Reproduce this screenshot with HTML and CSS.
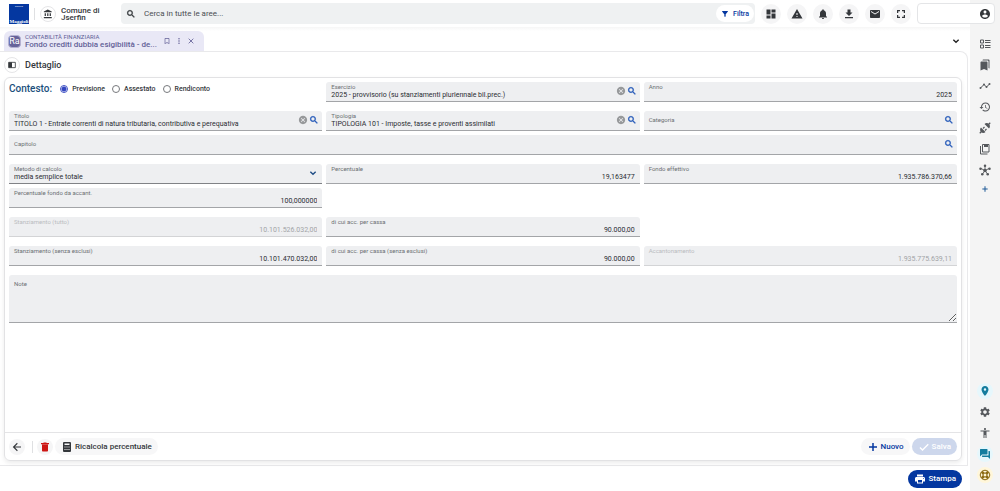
FILE: index.html
```html
<!DOCTYPE html>
<html lang="it">
<head>
<meta charset="utf-8">
<title>Fondo crediti dubbia esigibilità</title>
<meta name="viewport" content="width=device-width, initial-scale=1">
<link rel="stylesheet" href="styles.css">
</head>
<body>
<svg class="sprite" aria-hidden="true">
  <symbol id="search" viewBox="0 0 24 24"><path d="M15.5 14h-.79l-.28-.27A6.471 6.471 0 0 0 16 9.5 6.5 6.5 0 1 0 9.5 16c1.61 0 3.09-.59 4.23-1.57l.27.28v.79l5 4.99L20.49 19l-4.99-5zm-6 0C7.01 14 5 11.99 5 9.5S7.01 5 9.5 5 14 7.01 14 9.5 11.99 14 9.5 14z" stroke="currentColor"/></symbol>
  <symbol id="cancel" viewBox="0 0 24 24"><path d="M12 2C6.47 2 2 6.47 2 12s4.47 10 10 10 10-4.47 10-10S17.53 2 12 2zm5 13.59L15.59 17 12 13.41 8.41 17 7 15.59 10.59 12 7 8.41 8.41 7 12 10.59 15.59 7 17 8.41 13.41 12 17 15.59z"/></symbol>
  <symbol id="expand" viewBox="0 0 24 24"><path d="M4 8l8 8 8-8" fill="none" stroke="currentColor" stroke-width="4"/></symbol>
  <symbol id="add" viewBox="0 0 24 24"><path d="M20 13.500h-6.500V20h-3v-6.500H4v-3h6.500V4h3v6.500H20z"/></symbol>
</svg>
<div class="app">
  <header class="topbar">
    <div class="brand">
      <a class="logo" href="#" aria-label="Maggioli"><span class="logo-top">GRUPPO</span><span class="logo-name">Maggioli</span></a>
      <span class="divider"></span>
      <button class="round outlined" aria-label="Ente"><svg class="icon" viewBox="0 0 24 24"><path d="M4 10v7h3v-7H4zm6 0v7h3v-7h-3zM2 22h19v-3H2v3zm14-12v7h3v-7h-3zm-4.500-9L2 6v2h19V6l-9.500-5z"/></svg></button>
      <div class="org">Comune di Jserfin</div>
    </div>
    <div class="searchbox">
      <svg class="icon small"><use href="#search"/></svg>
      <input type="text" aria-label="Cerca" placeholder="Cerca in tutte le aree...">
      <button class="filter"><svg class="icon tiny" viewBox="0 0 24 24"><path d="M3.250 4.610C5.270 7.200 10 13 10 13v6c0 .55.45 1 1 1h2c.55 0 1-.45 1-1v-6s4.720-5.800 6.740-8.390A1 1 0 0 0 19.950 3H4.040a1 1 0 0 0-.79 1.610z"/></svg>Filtra</button>
    </div>
    <nav class="actions" aria-label="Azioni">
      <button class="round" aria-label="Dashboard"><svg class="icon" viewBox="0 0 24 24"><path d="M3 13h8V3H3v10zm0 8h8v-6H3v6zm10 0h8V11h-8v10zm0-18v6h8V3h-8z"/></svg></button>
      <button class="round" aria-label="Avvisi"><svg class="icon" viewBox="0 0 24 24"><path d="M1 21h22L12 2 1 21zm12-3h-2v-2h2v2zm0-4h-2v-4h2v4z"/></svg></button>
      <button class="round" aria-label="Notifiche"><svg class="icon" viewBox="0 0 24 24"><path d="M12 22c1.100 0 2-.9 2-2h-4c0 1.100.89 2 2 2zm6-6v-5c0-3.070-1.640-5.640-4.500-6.320V4c0-.83-.67-1.500-1.500-1.500s-1.500.67-1.500 1.500v.68C7.630 5.360 6 7.920 6 11v5l-2 2v1h16v-1l-2-2z"/></svg></button>
      <button class="round" aria-label="Scarica"><svg class="icon" viewBox="0 0 24 24"><path d="M19 9h-4V3H9v6H5l7 7 7-7zM4 18v2.500h16V18H4z"/></svg></button>
      <button class="round" aria-label="Posta"><svg class="icon" viewBox="0 0 24 24"><path d="M20 4H4c-1.100 0-1.990.9-1.990 2L2 18c0 1.100.9 2 2 2h16c1.100 0 2-.9 2-2V6c0-1.100-.9-2-2-2zm0 4l-8 5-8-5V6l8 5 8-5v2z"/></svg></button>
      <button class="round" aria-label="Schermo intero"><svg class="icon" viewBox="0 0 24 24"><path d="M6.500 14H4v6h6v-2.500H6.500V14zM4 10h2.500V6.500H10V4H4v6zm13.500 7.500H14V20h6v-6h-2.500v3.500zM14 4v2.500h3.500V10H20V4h-6z"/></svg></button>
    </nav>
    <button class="profile" aria-label="Profilo"><svg class="icon" viewBox="0 0 24 24"><path d="M12 2C6.480 2 2 6.480 2 12s4.480 10 10 10 10-4.480 10-10S17.520 2 12 2zm0 3c1.660 0 3 1.340 3 3s-1.340 3-3 3-3-1.340-3-3 1.340-3 3-3zm0 14.200c-2.500 0-4.710-1.280-6-3.220.03-1.990 4-3.080 6-3.080 1.990 0 5.970 1.090 6 3.080-1.290 1.940-3.500 3.220-6 3.220z"/></svg></button>
  </header>

  <div class="workspace">
    <div class="tabbar">
      <div class="tab">
        <span class="tab-badge">Ra</span>
        <div class="tab-text"><span class="tab-area">CONTABILITÀ FINANZIARIA</span><span class="tab-title">Fondo crediti dubbia esigibilità - de...</span></div>
        <button class="tab-action" aria-label="Segnalibro"><svg class="icon tiny" viewBox="0 0 24 24"><path d="M17 3H7c-1.100 0-2 .9-2 2v16l7-3 7 3V5c0-1.100-.9-2-2-2zm0 15l-5-2.200L7 18V5h10v13z"/></svg></button>
        <button class="tab-action" aria-label="Altro"><svg class="icon tiny" viewBox="0 0 24 24"><circle cx="12" cy="5" r="2.200"/><circle cx="12" cy="12" r="2.200"/><circle cx="12" cy="19" r="2.200"/></svg></button>
        <button class="tab-action" aria-label="Chiudi"><svg class="icon tiny" viewBox="0 0 24 24"><path d="M5 5l14 14M19 5L5 19" stroke="currentColor" stroke-width="2.500"/></svg></button>
      </div>
      <button class="tab-action collapse" aria-label="Elenco schede"><svg class="icon tiny"><use href="#expand"/></svg></button>
    </div>

    <main class="panel">
      <div class="panel-head">
        <button class="round outlined" aria-label="Pannello laterale"><svg class="icon tiny" viewBox="0 0 24 24"><path d="M2 4h20v16H2z" fill="none" stroke="currentColor" stroke-width="2.500"/><path d="M2 4h10v16H2z"/></svg></button>
        <h1>Dettaglio</h1>
      </div>
      <form class="card">
        <div class="form-body">
          <div class="row">
            <div class="context" role="radiogroup" aria-labelledby="ctx">
              <span class="context-title" id="ctx">Contesto:</span>
              <label><input type="radio" name="contesto" checked>Previsione</label>
              <label><input type="radio" name="contesto">Assestato</label>
              <label><input type="radio" name="contesto">Rendiconto</label>
            </div>
            <div class="field"><div class="text"><label for="esercizio">Esercizio</label><input id="esercizio" value="2025 - provvisorio (su stanziamenti pluriennale bil.prec.)"></div><button type="button" class="clear" aria-label="Cancella"><svg class="icon small"><use href="#cancel"/></svg></button><button type="button" class="lookup" aria-label="Cerca"><svg class="icon small"><use href="#search"/></svg></button></div>
            <div class="field number"><div class="text"><label for="anno">Anno</label><input id="anno" value="2025"></div></div>
          </div>
          <div class="row tight">
            <div class="field"><div class="text"><label for="titolo">Titolo</label><input id="titolo" value="TITOLO 1 - Entrate correnti di natura tributaria, contributiva e perequativa"></div><button type="button" class="clear" aria-label="Cancella"><svg class="icon small"><use href="#cancel"/></svg></button><button type="button" class="lookup" aria-label="Cerca"><svg class="icon small"><use href="#search"/></svg></button></div>
            <div class="field"><div class="text"><label for="tipologia">Tipologia</label><input id="tipologia" value="TIPOLOGIA 101 - Imposte, tasse e proventi assimilati"></div><button type="button" class="clear" aria-label="Cancella"><svg class="icon small"><use href="#cancel"/></svg></button><button type="button" class="lookup" aria-label="Cerca"><svg class="icon small"><use href="#search"/></svg></button></div>
            <div class="field empty"><label for="categoria">Categoria</label><input id="categoria"><button type="button" class="lookup" aria-label="Cerca"><svg class="icon small"><use href="#search"/></svg></button></div>
          </div>
          <div class="row">
            <div class="field empty wide"><label for="capitolo">Capitolo</label><input id="capitolo"><button type="button" class="lookup" aria-label="Cerca"><svg class="icon small"><use href="#search"/></svg></button></div>
          </div>
          <div class="row tight">
            <div class="field focus"><div class="text"><label for="metodo">Metodo di calcolo</label><select id="metodo"><option>media semplice totale</option></select></div><svg class="icon tiny chevron"><use href="#expand"/></svg></div>
            <div class="field number"><div class="text"><label for="perc">Percentuale</label><input id="perc" value="19,163477"></div></div>
            <div class="field number"><div class="text"><label for="fondo">Fondo effettivo</label><input id="fondo" value="1.935.786.370,66"></div></div>
          </div>
          <div class="row">
            <div class="field number"><div class="text"><label for="accant">Percentuale fondo da accant.</label><input id="accant" value="100,000000"></div></div>
          </div>
          <div class="row">
            <div class="field number disabled"><div class="text"><label for="stanz">Stanziamento (tutto)</label><input id="stanz" value="10.101.526.032,00" disabled></div></div>
            <div class="field number"><div class="text"><label for="cassa">di cui acc. per cassa</label><input id="cassa" value="90.000,00"></div></div>
          </div>
          <div class="row">
            <div class="field number"><div class="text"><label for="stanz2">Stanziamento (senza esclusi)</label><input id="stanz2" value="10.101.470.032,00"></div></div>
            <div class="field number"><div class="text"><label for="cassa2">di cui acc. per cassa (senza esclusi)</label><input id="cassa2" value="90.000,00"></div></div>
            <div class="field number disabled"><div class="text"><label for="accantonamento">Accantonamento</label><input id="accantonamento" value="1.935.775.639,11" disabled></div></div>
          </div>
          <div class="note"><label for="note">Note</label><textarea id="note"></textarea></div>
        </div>
        <div class="card-foot">
          <button type="button" class="round" aria-label="Indietro"><svg class="icon" viewBox="0 0 24 24"><path d="M20 10.800H8l5.400-5.400L12 3.500 3.500 12l8.500 8.500 1.500-1.900L8 13.200h12z"/></svg></button>
          <span class="divider"></span>
          <button type="button" class="round danger" aria-label="Elimina"><svg class="icon" viewBox="0 0 24 24"><path d="M6 19c0 1.100.9 2 2 2h8c1.100 0 2-.9 2-2V7H6v12zM20 4h-4.500l-1-1h-5l-1 1H4v2.300h16V4z"/></svg></button>
          <button type="button" class="pill recalc"><svg class="icon" viewBox="0 0 24 24"><path fill-rule="evenodd" d="M6 2h12a2 2 0 0 1 2 2v16a2 2 0 0 1-2 2H6a2 2 0 0 1-2-2V4a2 2 0 0 1 2-2zm1 3v3h10V5zm0 6v2h2v-2zm4 0v2h2v-2zm4 0v2h2v-2zm-8 5v2h2v-2zm4 0v2h2v-2zm4 0v2h2v-2z"/></svg>Ricalcola percentuale</button>
          <span class="spacer"></span>
          <button type="button" class="pill new"><svg class="icon"><use href="#add"/></svg>Nuovo</button>
          <button type="button" class="pill save" disabled><svg class="icon" viewBox="0 0 24 24"><path d="M9 16.200L4.800 12l-1.900 1.900L9 20 21.500 7.500l-1.900-1.900z"/></svg>Salva</button>
        </div>
      </form>
    </main>

    <footer class="bottombar"><button class="pill print"><svg class="icon" viewBox="0 0 24 24"><path d="M19 8H5c-1.660 0-3 1.340-3 3v6h4v4h12v-4h4v-6c0-1.660-1.340-3-3-3zm-3 11H8v-5h8v5zm3-7c-.55 0-1-.45-1-1s.45-1 1-1 1 .45 1 1-.45 1-1 1zm-1-9H6v4h12V3z"/></svg>Stampa</button></footer>
  </div>

  <aside class="rail">
    <button aria-label="Elenco"><svg class="icon" viewBox="0 0 24 24"><path d="M3 4h6v6H3zM3 14h6v6H3z" fill="none" stroke="currentColor" stroke-width="2"/><path d="M12 4h11v2H12zm0 4h11v2H12zm0 6h11v2H12zm0 4h11v2H12z"/></svg></button>
    <button aria-label="Segnalibri"><svg class="icon" viewBox="0 0 24 24"><path d="M19 18l2 1V3c0-1.100-.9-2-2-2H8.990C7.890 1 7 1.900 7 3h10c1.100 0 2 .9 2 2v13zM15 5H5c-1.100 0-2 .9-2 2v16l7-3 7 3V7c0-1.100-.9-2-2-2z"/></svg></button>
    <button aria-label="Andamento"><svg class="icon" viewBox="0 0 24 24"><path d="M3 16l7-7 5 5 6-6" fill="none" stroke="currentColor" stroke-width="2"/><circle cx="3" cy="16" r="2"/><circle cx="10" cy="9" r="2"/><circle cx="15" cy="14" r="2"/><circle cx="21" cy="8" r="2"/></svg></button>
    <button aria-label="Cronologia"><svg class="icon" viewBox="0 0 24 24"><path d="M13 3c-4.970 0-9 4.030-9 9H1l3.890 3.890.07.14L9 12H6c0-3.870 3.130-7 7-7s7 3.130 7 7-3.130 7-7 7c-1.930 0-3.680-.79-4.940-2.060l-1.420 1.420C8.270 19.990 10.510 21 13 21c4.970 0 9-4.030 9-9s-4.030-9-9-9zm-1 5v5l4.280 2.540.72-1.210-3.500-2.080V8H12z"/></svg></button>
    <button aria-label="Connessioni"><svg class="icon" viewBox="0 0 24 24"><path d="M1.500 22.500l4-4M18.500 5.500l4-4M8 13l3-3M12 17l3-3" stroke="currentColor" stroke-width="2.400"/><path d="M4 11l9 9c-2.500 2.500-6.500 2.500-9 0s-2.500-6.500 0-9zM11 4l9 9c2.500-2.500 2.500-6.500 0-9s-6.500-2.500-9 0z"/></svg></button>
    <button aria-label="Copia"><svg class="icon" viewBox="0 0 24 24"><path d="M3 6v16h14M7 3h13v15H7z" fill="none" stroke="currentColor" stroke-width="2"/><path d="M10 2h8v6h-8z"/></svg></button>
    <button aria-label="Rete"><svg class="icon" viewBox="0 0 24 24"><path d="M12 13V4M12 13L4 9M12 13l8-4M12 13l-5 7M12 13l5 7" stroke="currentColor" stroke-width="1.800"/><circle cx="12" cy="13" r="3.500"/><circle cx="12" cy="3.500" r="2.500"/><circle cx="3" cy="9.500" r="2.500"/><circle cx="21" cy="9.500" r="2.500"/><circle cx="6.500" cy="20.500" r="2.500"/><circle cx="17.500" cy="20.500" r="2.500"/></svg></button>
    <button class="blue" aria-label="Aggiungi"><svg class="icon tiny"><use href="#add"/></svg></button>
    <span class="spacer"></span>
    <button class="teal" aria-label="Posizione"><svg class="icon" viewBox="0 0 24 24"><path d="M12 2C8.130 2 5 5.130 5 9c0 5.250 7 13 7 13s7-7.750 7-13c0-3.870-3.130-7-7-7zm0 9.500a2.500 2.500 0 0 1 0-5 2.500 2.500 0 0 1 0 5z"/></svg></button>
    <button aria-label="Impostazioni"><svg class="icon" viewBox="0 0 24 24"><path d="M19.140 12.940c.04-.3.06-.61.06-.94 0-.32-.02-.64-.07-.94l2.030-1.580c.18-.14.23-.41.12-.61l-1.920-3.320c-.12-.22-.37-.29-.59-.22l-2.390.96c-.5-.38-1.030-.7-1.620-.94l-.36-2.540c-.04-.24-.24-.41-.48-.41h-3.840c-.24 0-.43.17-.47.41l-.36 2.540c-.59.24-1.130.57-1.620.94l-2.390-.96c-.22-.08-.47 0-.59.22L2.740 8.870c-.12.21-.08.47.12.61l2.030 1.580c-.05.3-.09.63-.09.94s.02.64.07.94l-2.030 1.580c-.18.14-.23.41-.12.61l1.920 3.320c.12.22.37.29.59.22l2.390-.96c.5.38 1.030.7 1.620.94l.36 2.540c.05.24.24.41.48.41h3.840c.24 0 .44-.17.47-.41l.36-2.540c.59-.24 1.130-.56 1.620-.94l2.390.96c.22.08.47 0 .59-.22l1.920-3.320c.12-.22.07-.47-.12-.61l-2.010-1.580zM12 15.600c-1.980 0-3.600-1.620-3.600-3.600s1.620-3.600 3.600-3.600 3.600 1.620 3.600 3.600-1.620 3.600-3.600 3.600z"/></svg></button>
    <button aria-label="Accessibilità"><svg class="icon" viewBox="0 0 24 24"><path d="M12 2c1.100 0 2 .9 2 2s-.9 2-2 2-2-.9-2-2 .9-2 2-2zm9 7h-6v13h-2v-6h-2v6H9V9H3V7h18v2z"/></svg></button>
    <button class="teal" aria-label="Chat"><svg class="icon" viewBox="0 0 24 24"><path d="M21 6h-2v9H6v2c0 .55.45 1 1 1h11l4 4V7c0-.55-.45-1-1-1zm-4 6V3c0-.55-.45-1-1-1H3c-.55 0-1 .45-1 1v14l4-4h10c.55 0 1-.45 1-1z"/></svg></button>
    <button class="gold" aria-label="Assistenza"><svg class="icon" viewBox="0 0 24 24"><circle cx="12" cy="12" r="9.500" fill="none" stroke="currentColor" stroke-width="2"/><circle cx="12" cy="12" r="4" fill="none" stroke="currentColor" stroke-width="2"/><path d="M5.500 5.500l4 4M18.500 5.500l-4 4M5.500 18.500l4-4M18.500 18.500l-4-4" stroke="currentColor" stroke-width="5"/></svg></button>
  </aside>
</div>
</body>
</html>
```

FILE: styles.css
```css
* { box-sizing: border-box; }
body { margin: 0; font-family: Roboto, "Liberation Sans", sans-serif; font-size: 8px; color: #34373b; background: #fff; }
button, input, select, textarea { font: inherit; color: inherit; border: 0; padding: 0; margin: 0; background: none; outline: 0; border-radius: 0; }
button { display: inline-flex; align-items: center; justify-content: center; flex: none; }
.sprite { position: absolute; width: 0; height: 0; }
.icon { width: 12px; height: 12px; fill: currentColor; flex: none; display: block; }
.icon.small { width: 10px; height: 10px; }
.icon.tiny { width: 8px; height: 8px; }
.spacer { flex: 1; }
.divider { width: 1px; height: 12px; background: #dfe0e2; }

.app { display: grid; grid-template-columns: minmax(0, 1fr) 30px; grid-template-rows: auto minmax(0, 1fr); min-height: 100vh; }

.topbar { grid-column: 1 / -1; display: flex; align-items: center; gap: 6px; padding: 3px 5px 3px 9px; background: linear-gradient(to left, #f4f4f4 30px, #fff 30px); }
.brand { display: flex; align-items: center; gap: 5px; }
.logo { display: flex; flex-direction: column; justify-content: space-between; align-items: center; width: 20px; height: 20px; padding-top: 1px; background: #0437a0; color: #fff; text-decoration: none; line-height: 1; }
.logo-top { font-size: 2px; }
.logo-name { font-family: "Liberation Serif", serif; font-size: 5px; font-weight: 700; }
.round { width: 20px; height: 20px; border-radius: 50%; background: #f5f5f6; }
.round.outlined { width: 16px; height: 16px; background: #fff; border: 1px solid #e5e5e7; }
.round.outlined .icon:not(.tiny) { width: 10px; height: 10px; }
.org { width: 54px; font-size: 8px; font-weight: 500; line-height: 7px; }
.searchbox { flex: 1; display: flex; align-items: center; gap: 8px; height: 21px; padding: 0 1px 0 5px; background: #eff1f2; border-radius: 4px; }
.searchbox input { flex: 1; min-width: 0; }
.searchbox input::placeholder { color: #4b4e52; opacity: 1; }
.filter { gap: 4px; width: 38px; height: 17px; border-radius: 9px; background: #fff; color: #0437a0; font-size: 7px; font-weight: 500; }
.actions { display: flex; gap: 6px; }
.profile { width: 78px; height: 21px; padding-right: 3px; justify-content: flex-end; background: #fff; border: 1px solid #e4e5e7; border-radius: 4px; }

.workspace { display: flex; flex-direction: column; min-width: 0; background: #fff; }
.tabbar { display: flex; align-items: center; justify-content: space-between; height: 24px; padding: 4px 8px 0 4px; background: linear-gradient(#f6f6f6, #fff 4px); }
.tab { display: flex; align-items: center; align-self: stretch; width: 200px; padding: 0 6px 0 4px; border-radius: 6px 6px 0 0; background: #e9e8f6; color: #625f96; }
.tab-badge { width: 13px; height: 13px; border-radius: 4px; background: #66639a; border: 1px solid #b4b2d2; color: #fff; font-size: 9px; line-height: 11px; text-align: center; flex: none; }
.tab-text { display: flex; flex-direction: column; width: 131px; margin: 0 5px 0 4px; white-space: nowrap; }
.tab-area { font-size: 6px; line-height: 7px; }
.tab-title { font-size: 8px; line-height: 9px; font-weight: 500; }
.tab-action { width: 12px; height: 12px; }
.collapse { color: #222; }

.panel { flex: 1; display: flex; flex-direction: column; min-height: 0; margin-right: 2px; padding: 0 5px 4px 4px; border: 1px solid #e9e9eb; border-left: 0; border-radius: 0 8px 0 0; }
.panel-head { display: flex; align-items: center; gap: 5px; height: 25px; }
.panel-head h1 { margin: 0; font-size: 9px; font-weight: 500; }
.card { flex: 1; display: flex; flex-direction: column; border: 1px solid #e2e2e4; border-radius: 6px; box-shadow: 0 2px 4px rgba(0, 0, 0, .08); }
.form-body { flex: 1; display: flex; flex-direction: column; gap: 9px; padding: 4px; }
.row { display: grid; grid-template-columns: repeat(3, minmax(0, 1fr)); gap: 4px; }
.row.tight { margin-bottom: -5px; }
.context { display: flex; align-items: center; gap: 7px; height: 13px; }
.context-title { margin-right: 1px; font-size: 10px; font-weight: 500; color: #1b4f7c; }
.context label { display: flex; align-items: center; gap: 4px; font-size: 7px; font-weight: 500; }
.context input { appearance: none; width: 8px; height: 8px; border: 1px solid #77797d; border-radius: 50%; }
.context input:checked { border-color: #3f51c5; background: radial-gradient(#3346c0 2px, #fff 3px); }

.field { display: flex; align-items: center; height: 20px; padding: 0 3px 1px 5px; background: #eeeff1; border-bottom: 1px solid #a3a5a8; border-radius: 3px 3px 0 0; }
.field.number { padding-right: 5px; }
.field.wide { grid-column: 1 / -1; }
.field.focus { border-color: #808286; }
.text { flex: 1; display: flex; flex-direction: column; min-width: 0; }
.field label, .note label { font-size: 6px; line-height: 8px; color: #6c6f73; }
.field input, .field select { width: 100%; height: 8px; font-size: 7px; line-height: 8px; color: #2a2d31; appearance: none; }
.field.empty input { flex: 1; min-width: 0; }
.number input { text-align: right; }
.field.disabled { border-color: #d3d4d6; }
.disabled label { color: #babcbf; }
.field.disabled input { color: #a2a4a7; }
.clear { color: #97999b; margin-right: 1px; }
.lookup { color: #2157b8; }
.chevron { margin-right: 2px; color: #1f4d85; }
.note { display: flex; flex-direction: column; height: 48px; padding: 5px 0 0 5px; background: #eeeff1; border-bottom: 1px solid #a3a5a8; border-radius: 3px 3px 0 0; }
.note textarea { flex: 1; resize: vertical; font-size: 7px; }

.card-foot { display: flex; align-items: center; height: 28px; padding: 0 4px; border-top: 1px solid #e4e4e6; }
.card-foot .round { width: 16px; height: 16px; }
.card-foot .divider { margin: 0 4px 0 7px; }
.danger { color: #cd1714; }
.pill { gap: 3px; height: 17px; padding: 0 6px; border-radius: 9px; font-size: 8px; font-weight: 500; }
.recalc { margin-left: 2px; gap: 2px; background: #f7f7f8; }
.new { gap: 2px; background: #f7f7f8; color: #0437a0; margin-right: 2px; }
.save { gap: 2px; background: #cdd7ec; color: #fff; }
.bottombar { display: flex; justify-content: flex-end; align-items: center; height: 25px; padding-right: 8px; }
.print { height: 18px; gap: 2px; background: #0437a0; color: #fff; }

.rail { display: flex; flex-direction: column; align-items: center; padding: 9px 0 8px; background: #f4f4f4; color: #55585c; }
.rail button { width: 16px; height: 16px; margin-bottom: 5px; border-radius: 50%; }
.rail button:last-child { margin-bottom: 0; }
.rail .blue { height: 12px; color: #1f5a97; }
.rail .teal { background: #e6f7fc; color: #147c9e; }
.rail .gold { background: #fff6da; color: #8d6b14; }
```
